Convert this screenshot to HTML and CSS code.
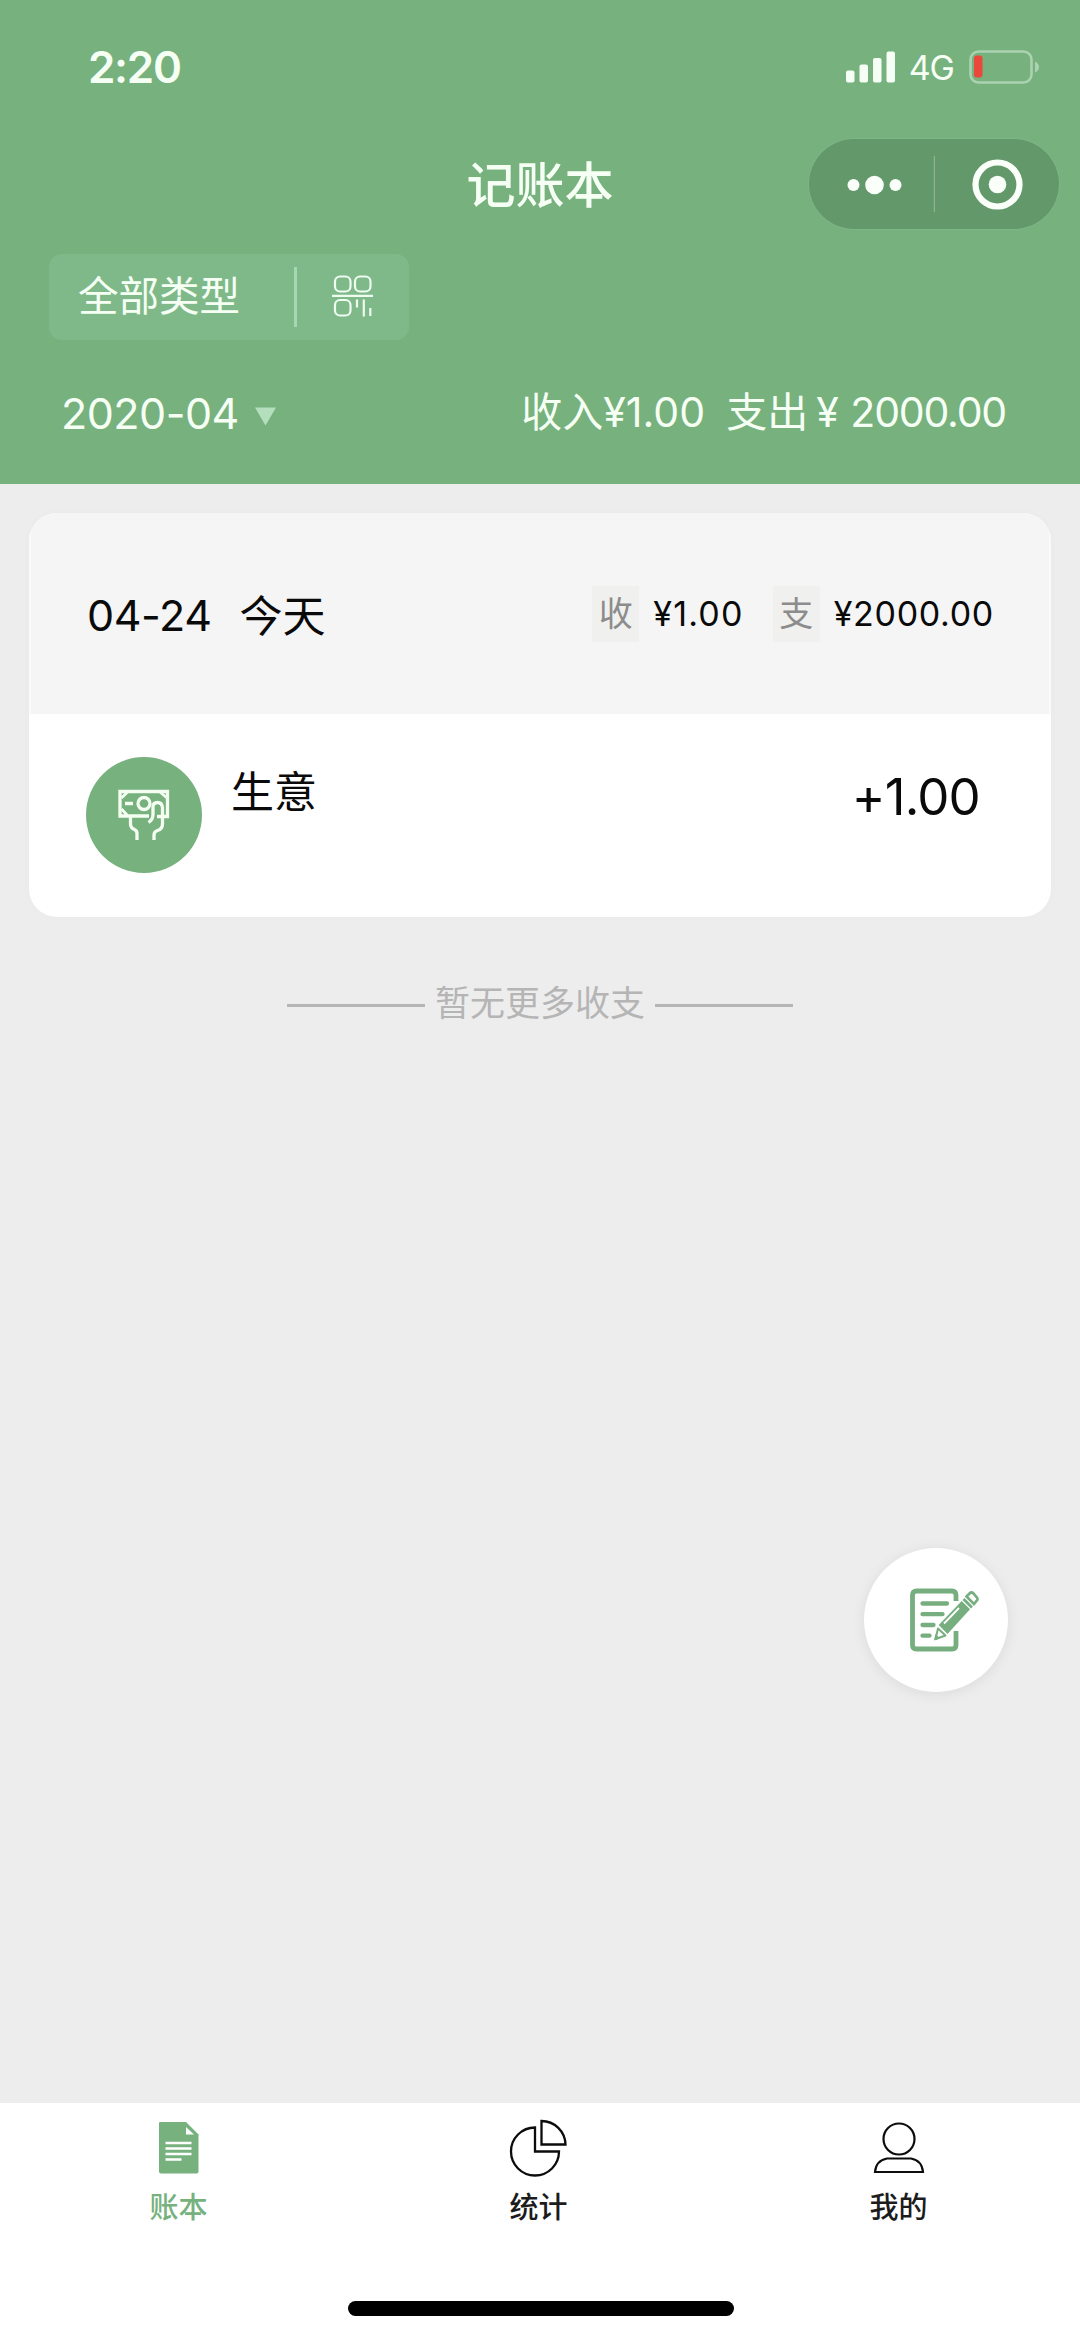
FILE: index.html
```html
<!DOCTYPE html>
<html lang="zh-CN">
<head>
<meta charset="utf-8">
<title>记账本</title>
<link rel="stylesheet" href="styles.css">
</head>
<body>
<div class="app">
  <header class="header">
    <div class="status">
      <span class="time">2:20</span>
      <div class="status-right">
        <svg class="signal" width="50" height="32" viewBox="0 0 50 32" fill="#f6fff6">
          <rect x="0" y="19.500" width="8.500" height="12" rx="2"/>
          <rect x="13.500" y="13.500" width="8.500" height="18" rx="2"/>
          <rect x="27" y="7" width="8.500" height="24.500" rx="2"/>
          <rect x="40.500" y="0.500" width="8.500" height="31" rx="2"/>
        </svg>
        <span class="network">4G</span>
        <svg class="battery" width="70" height="34" viewBox="0 0 70 34">
          <rect x="1.500" y="1.500" width="61" height="31" rx="8" fill="none" stroke="#abd2b1" stroke-width="2.600"/>
          <rect x="5" y="5.500" width="8.500" height="22" rx="3" fill="#e9483a"/>
          <path d="M66 11.500q4 2 4 5.500t-4 5.500z" fill="#abd2b1"/>
        </svg>
      </div>
    </div>
    <div class="nav">
      <h1 class="title">记账本</h1>
      <div class="capsule">
        <svg width="250" height="90" viewBox="0 0 250 90" fill="#fafffa">
          <circle cx="44.500" cy="46" r="6"/>
          <circle cx="65.500" cy="46" r="9.300"/>
          <circle cx="86.500" cy="46" r="6"/>
          <rect x="124.800" y="17" width="1.200" height="56" fill="#8db594"/>
          <circle cx="188.500" cy="45.500" r="22" fill="none" stroke="#fafffa" stroke-width="6.200"/>
          <circle cx="188.500" cy="45.500" r="8.800"/>
        </svg>
      </div>
    </div>
    <div class="filter">
      <span class="filter-label">全部类型</span>
      <span class="filter-divider"></span>
      <svg class="filter-icon" width="42" height="42" viewBox="0 0 42 42" fill="none" stroke="#eefbef" stroke-width="2.200">
        <rect x="3" y="1.500" width="15.500" height="15" rx="5"/>
        <rect x="23" y="1.500" width="15.500" height="15" rx="5"/>
        <path d="M0 20.800h41"/>
        <rect x="3" y="25" width="15.500" height="15.500" rx="5"/>
        <path d="M25 24.500v8M31.800 24.500v17M38.300 33v8"/>
      </svg>
    </div>
    <div class="summary">
      <span class="month">2020-04</span>
      <svg class="caret" width="21" height="19" viewBox="0 0 22 19"><path d="M0 0h22L11 19z" fill="#b4dfbd"/></svg>
      <div class="totals">
        <span class="total-in">收入¥1.00</span>
        <span class="total-label">支出</span>
        <span class="total-yen">¥</span>
        <span class="total-out">2000.00</span>
      </div>
    </div>
  </header>

  <main class="main">
    <section class="card">
      <div class="card-head">
        <span class="date">04-24</span>
        <span class="today">今天</span>
        <div class="day-sums">
          <span class="tag">收</span>
          <span class="amount amount-in">¥1.00</span>
          <span class="tag">支</span>
          <span class="amount">¥2000.00</span>
        </div>
      </div>
      <div class="entry">
        <div class="entry-icon">
          <svg width="52" height="52" viewBox="0 0 52 52" fill="none" stroke="#f4fff2" stroke-width="3.300">
            <path d="M39 27.500h10.500V2.500H2v24.500h29"/>
            <path d="M9.500 3L3.500 9M3.500 20l6 6.500M42 3l7 6" stroke-width="2.800"/>
            <path d="M7 14.500h8"/>
            <circle cx="26" cy="14.500" r="6"/>
            <path d="M12.500 27v8q0 4 4 5.500q2.500 1 2.500 4V51"/>
            <path d="M30.500 33.500q4.500-3 4.500-8v-7.500q0-4.500 4.500-4.500t5 5V35q0 5-5 6.500q-3.500 1-3.500 4.500v5"/>
          </svg>
        </div>
        <span class="entry-name">生意</span>
        <span class="entry-value">+1.00</span>
      </div>
    </section>
    <div class="more">
      <span class="more-line"></span>
      <span class="more-text">暂无更多收支</span>
      <span class="more-line"></span>
    </div>
    <button class="fab" aria-label="记一笔">
      <svg width="70" height="64" viewBox="0 0 70 64" fill="none" stroke="#76ae7f">
        <path d="M47 13V7q0-4-4-4H7.500q-4 0-4 4v50q0 4 4 4H43q4 0 4-4V43" stroke-width="4.800"/>
        <path d="M13.500 15.500h24.500M13.500 26.200h20M13.500 37h11M13.500 47.700h7" stroke-width="4.300" stroke-linecap="round"/>
        <path d="M29.700 37L52.700 13L61 21.300L38.500 46z" fill="#76ae7f" stroke="none"/>
        <path d="M35 35.500L50 20" stroke="#ffffff" stroke-width="1.800"/>
        <path d="M29 40.500L26.500 51L36.500 47.500z" stroke-width="2" stroke-linejoin="round"/>
        <path d="M25 52.500l1.500-6.500 4.500 4.500z" fill="#76ae7f" stroke="none"/>
        <path d="M54.500 11L63 19.500" stroke-width="2.800"/>
        <path d="M57.500 8.500L60.500 5.500q2-2 4 0L67.500 9q2 2 0 4L65 16z" stroke-width="2.600"/>
      </svg>
    </button>
  </main>

  <nav class="tabbar">
    <a class="tab tab-active">
      <svg class="tab-icon" width="60" height="60" viewBox="0 0 60 60">
        <path d="M12 4h26l12.500 12.500V53.500q0 2-2 2H13q-2 0-2-2V5q0-1 1-1z" fill="#76b17e"/>
        <path d="M38 9v7.500h8z" fill="#ffffff"/>
        <path d="M17.500 25h26M17.500 30.500h26M17.500 36h26M17.500 41.500h16" stroke="#ffffff" stroke-width="2.300"/>
      </svg>
      <span class="tab-label">账本</span>
    </a>
    <a class="tab">
      <svg class="tab-icon" width="60" height="60" viewBox="0 0 60 60" fill="none" stroke="#0c0c0c" stroke-width="2.300">
        <path d="M27 9.500A24 24 0 1 0 51 33.500H27z"/>
        <path d="M33.500 3A24 24 0 0 1 57.500 26.500H33.500z"/>
      </svg>
      <span class="tab-label">统计</span>
    </a>
    <a class="tab">
      <svg class="tab-icon" width="60" height="60" viewBox="0 0 60 60" fill="none" stroke="#0c0c0c" stroke-width="2.200">
        <circle cx="31" cy="21" r="15.500"/>
        <path d="M19 40.500H43q11 2 12 13.500H7Q8 42.500 19 40.500z"/>
      </svg>
      <span class="tab-label">我的</span>
    </a>
    <div class="home-indicator"></div>
  </nav>
</div>
</body>
</html>
```
FILE: styles.css
```css
* { box-sizing: border-box; }
body {
  margin: 0;
  font-family: Inter, "Noto Sans CJK SC", sans-serif;
  color: #0a0a0a;
}
.app {
  width: 1080px;
  height: 2339px;
  display: flex;
  flex-direction: column;
  background: #ededed;
  overflow: hidden;
}
svg { display: block; flex: none; }
span { white-space: nowrap; }

.header {
  height: 484px;
  background: #76b17e;
  color: #f6fff4;
  flex: none;
}
.status {
  height: 132px;
  display: flex;
  align-items: center;
  justify-content: space-between;
  padding: 0 41px 0 88px;
}
.time { font-size: 44px; font-weight: 600; line-height: 44px; letter-spacing: -1.3px; margin-top: 2px; }
.status-right { display: flex; align-items: center; margin-top: 1px; }
.network { font-size: 34px; line-height: 36px; margin: 2px 15px 0 13px; letter-spacing: -1px; }
.nav {
  height: 104px;
  display: grid;
  grid-template-columns: 1fr auto 1fr;
  align-items: center;
  padding-right: 21px;
}
.title {
  grid-column: 2;
  margin: 3px 0 0 21px;
  font-size: 49px;
  font-weight: 500;
  line-height: 56px;
}
.capsule {
  justify-self: end;
  width: 250px;
  height: 90px;
  border-radius: 45px;
  background: #63986b;
  box-shadow: 0 0 0 1px #7eb687;
}
.filter {
  width: 360px;
  height: 86px;
  margin: 18px 0 0 49px;
  border-radius: 13px;
  background: #7fb98a;
  display: flex;
  align-items: center;
}
.filter-label { width: 245px; padding-left: 29px; font-size: 40.500px; line-height: 48px; }
.filter-divider { width: 3px; height: 60px; background: #a5d8b0; }
.filter-icon { margin: 0 0 3px 35px; }
.summary {
  height: 144px;
  display: flex;
  align-items: center;
  padding: 0 74px 0 61px;
}
.month { font-size: 43px; line-height: 48px; margin-top: 2px; letter-spacing: -0.5px; }
.caret { margin: 8px 0 0 16px; }
.totals { margin-left: auto; display: flex; font-size: 41px; line-height: 48px; }
.total-in { width: 205px; }
.total-label { width: 90px; }
.total-yen { width: 34px; }
.total-out { letter-spacing: -1.2px; }

.main {
  flex: 1;
  padding: 29px 29px 0;
}
.card {
  height: 404px;
  border-radius: 28px;
  background: #ffffff;
  overflow: hidden;
  box-shadow: 0 0 10px rgba(0, 0, 0, 0.02);
}
.card-head {
  height: 201px;
  background: #f5f5f5;
  border: solid #fafafa;
  border-width: 0 2px;
  display: flex;
  align-items: center;
  padding: 0 55px 0 56px;
}
.date { font-size: 43px; line-height: 48px; margin-top: 3px; letter-spacing: -0.4px; }
.today { font-size: 43px; line-height: 48px; margin: 4px 0 0 28px; }
.day-sums { margin-left: auto; display: flex; align-items: center; }
.tag {
  width: 47px;
  height: 56px;
  background: #f0f0ef;
  color: #8c8c8c;
  font-size: 34px;
  line-height: 56px;
  text-align: center;
}
.amount { font-size: 34px; line-height: 40px; margin-left: 14px; letter-spacing: 0.7px; }
.amount-in { margin-right: 29px; letter-spacing: 1.2px; }
.entry { display: flex; padding: 43px 71px 0 57px; }
.entry-icon {
  width: 116px;
  height: 116px;
  border-radius: 50%;
  background: #76b17e;
  display: flex;
  align-items: center;
  justify-content: center;
}
.entry-name { font-size: 43px; line-height: 48px; margin: 11px 0 0 29px; }
.entry-value { margin: 10px 0 0 auto; font-size: 51px; line-height: 60px; letter-spacing: -0.8px; }

.more {
  margin-top: 62px;
  display: flex;
  justify-content: center;
  align-items: center;
  gap: 10px;
}
.more-line { width: 138px; height: 3px; margin-top: 5px; background: #b5b5b5; }
.more-text { font-size: 35px; line-height: 48px; color: #b5b5b5; }
.fab {
  width: 144px;
  height: 144px;
  margin: 521px 43px 0 auto;
  padding: 0 0 0 16px;
  border: 0;
  border-radius: 50%;
  background: #ffffff;
  box-shadow: 0 2px 14px rgba(0, 0, 0, 0.08);
  display: flex;
  align-items: center;
  justify-content: center;
}

.tabbar {
  height: 236px;
  flex: none;
  background: #ffffff;
  display: grid;
  grid-template-columns: repeat(3, 360px);
  grid-template-rows: 198px 15px;
  margin-left: -1.5px;
  width: 1083px;
}
.tab { display: flex; flex-direction: column; align-items: center; padding-top: 15px; color: #1c1c1c; }
.tab-icon { margin-right: 2px; }
.tab-label { font-size: 29px; font-weight: 500; line-height: 36px; margin-top: 12px; }
.tab-active { color: #76b17e; }
.home-indicator {
  grid-column: 1 / 4;
  width: 386px;
  height: 15px;
  margin-left: 349px;
  border-radius: 8px;
  background: #000000;
}
```
